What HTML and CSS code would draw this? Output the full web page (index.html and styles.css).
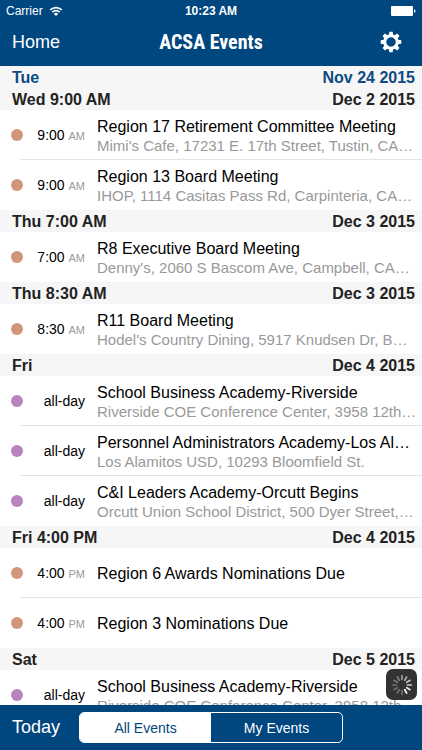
FILE: index.html
```
<!DOCTYPE html>
<html lang="en">

<head>
    <meta charset="utf-8">
    <meta name="viewport" content="width=device-width, initial-scale=1">
    <title>ACSA Events</title>
    <link rel="stylesheet" href="styles.css">
</head>

<body>
    <header>
        <div class="status-bar">
            <div class="carrier">
                <span>Carrier</span>
                <svg width="14" height="10" viewBox="0 0 14 10" fill="none" stroke="#fff" stroke-width="1.7">
                    <path d="M1.2 4 A8.2 8.2 0 0 1 12.8 4" />
                    <path d="M3.4 6.2 A5.1 5.1 0 0 1 10.6 6.2" />
                    <path d="M7 10 L4.9 7.9 A3 3 0 0 1 9.1 7.9 Z" fill="#fff" stroke="none" />
                </svg>
            </div>
            <div class="clock">10:23 AM</div>
            <div class="battery">
                <svg width="25" height="10" viewBox="0 0 25 10" fill="#fff">
                    <rect x="0" y="0" width="22" height="10" rx="1" />
                    <path d="M23 3.2 Q24.6 3.6 24.6 5 Q24.6 6.4 23 6.8 Z" />
                </svg>
            </div>
        </div>
        <nav class="nav-bar">
            <a href="#" class="home">Home</a>
            <h1>ACSA Events</h1>
            <button type="button" class="settings" aria-label="Settings">
                <svg width="22" height="22" viewBox="-11 -11 22 22" fill="#fff">
                    <g id="teeth">
                        <path d="M-2.2 -6.5 L-1.7 -10.3 H1.7 L2.2 -6.5 Z M-2.2 6.5 L-1.7 10.3 H1.7 L2.2 6.5 Z" />
                        <path d="M-6.5 -2.2 L-10.3 -1.7 V1.7 L-6.5 2.2 Z M6.5 -2.2 L10.3 -1.7 V1.7 L6.5 2.2 Z" />
                    </g>
                    <use href="#teeth" transform="rotate(45)" />
                    <circle r="6.3" fill="none" stroke="#fff" stroke-width="3.1" />
                </svg>
            </button>
        </nav>
    </header>

    <main>
        <h2 class="today"><span>Tue</span><span>Nov 24 2015</span></h2>

        <h2><span>Wed 9:00 AM</span><span>Dec 2 2015</span></h2>
        <ul>
            <li class="event">
                <span class="dot"></span>
                <span class="time">9:00 <small>AM</small></span>
                <div class="info">
                    <h3>Region 17 Retirement Committee Meeting</h3>
                    <p>Mimi's Cafe, 17231 E. 17th Street, Tustin, CA…</p>
                </div>
            </li>
            <li class="event">
                <span class="dot"></span>
                <span class="time">9:00 <small>AM</small></span>
                <div class="info">
                    <h3>Region 13 Board Meeting</h3>
                    <p>IHOP, 1114 Casitas Pass Rd, Carpinteria, CA…</p>
                </div>
            </li>
        </ul>

        <h2><span>Thu 7:00 AM</span><span>Dec 3 2015</span></h2>
        <ul>
            <li class="event">
                <span class="dot"></span>
                <span class="time">7:00 <small>AM</small></span>
                <div class="info">
                    <h3>R8 Executive Board Meeting</h3>
                    <p>Denny's, 2060 S Bascom Ave, Campbell, CA…</p>
                </div>
            </li>
        </ul>

        <h2><span>Thu 8:30 AM</span><span>Dec 3 2015</span></h2>
        <ul>
            <li class="event">
                <span class="dot"></span>
                <span class="time">8:30 <small>AM</small></span>
                <div class="info">
                    <h3>R11 Board Meeting</h3>
                    <p>Hodel's Country Dining, 5917 Knudsen Dr, B…</p>
                </div>
            </li>
        </ul>

        <h2><span>Fri</span><span>Dec 4 2015</span></h2>
        <ul>
            <li class="event academy">
                <span class="dot"></span>
                <span class="time">all-day</span>
                <div class="info">
                    <h3>School Business Academy-Riverside</h3>
                    <p>Riverside COE Conference Center, 3958 12th…</p>
                </div>
            </li>
            <li class="event academy">
                <span class="dot"></span>
                <span class="time">all-day</span>
                <div class="info">
                    <h3>Personnel Administrators Academy-Los Al…</h3>
                    <p>Los Alamitos USD, 10293 Bloomfield St.</p>
                </div>
            </li>
            <li class="event academy">
                <span class="dot"></span>
                <span class="time">all-day</span>
                <div class="info">
                    <h3>C&amp;I Leaders Academy-Orcutt Begins</h3>
                    <p>Orcutt Union School District, 500 Dyer Street,…</p>
                </div>
            </li>
        </ul>

        <h2><span>Fri 4:00 PM</span><span>Dec 4 2015</span></h2>
        <ul>
            <li class="event">
                <span class="dot"></span>
                <span class="time">4:00 <small>PM</small></span>
                <div class="info">
                    <h3>Region 6 Awards Nominations Due</h3>
                </div>
            </li>
            <li class="event">
                <span class="dot"></span>
                <span class="time">4:00 <small>PM</small></span>
                <div class="info">
                    <h3>Region 3 Nominations Due</h3>
                </div>
            </li>
        </ul>

        <h2><span>Sat</span><span>Dec 5 2015</span></h2>
        <ul>
            <li class="event academy">
                <span class="dot"></span>
                <span class="time">all-day</span>
                <div class="info">
                    <h3>School Business Academy-Riverside</h3>
                    <p>Riverside COE Conference Center, 3958 12th…</p>
                </div>
            </li>
        </ul>
    </main>

    <footer>
        <div class="loading">
            <svg width="22" height="22" viewBox="-11 -11 22 22" stroke="#fff" stroke-width="1.7" stroke-linecap="round">
                <path d="M0 -5.5 V-9.3" opacity=".5" />
                <path d="M0 -5.5 V-9.3" opacity=".6" transform="rotate(30)" />
                <path d="M0 -5.5 V-9.3" opacity=".7" transform="rotate(60)" />
                <path d="M0 -5.5 V-9.3" opacity=".8" transform="rotate(90)" />
                <path d="M0 -5.5 V-9.3" opacity=".9" transform="rotate(120)" />
                <path d="M0 -5.5 V-9.3" transform="rotate(150)" />
                <path d="M0 -5.5 V-9.3" opacity=".3" transform="rotate(180)" />
                <path d="M0 -5.5 V-9.3" opacity=".3" transform="rotate(210)" />
                <path d="M0 -5.5 V-9.3" opacity=".3" transform="rotate(240)" />
                <path d="M0 -5.5 V-9.3" opacity=".3" transform="rotate(270)" />
                <path d="M0 -5.5 V-9.3" opacity=".35" transform="rotate(300)" />
                <path d="M0 -5.5 V-9.3" opacity=".4" transform="rotate(330)" />
            </svg>
        </div>
        <a href="#" class="go-today">Today</a>
        <div class="tabs">
            <button type="button" class="active">All Events</button>
            <button type="button">My Events</button>
        </div>
    </footer>
</body>

</html>
```
FILE: styles.css
```
* {
    box-sizing: border-box;
    margin: 0;
    padding: 0;
}

body {
    display: flex;
    flex-direction: column;
    height: 100vh;
    font-family: "Liberation Sans", Arial, sans-serif;
    background-color: #fff;
    color: #000;
    overflow: hidden;
}

header,
footer {
    flex: none;
    background-color: #00467f;
    color: #fff;
}

a {
    color: #fff;
    text-decoration: none;
}

button {
    font-family: inherit;
    border: none;
    background: none;
    color: #fff;
    cursor: pointer;
}

.status-bar {
    display: grid;
    grid-template-columns: 1fr auto 1fr;
    align-items: center;
    height: 22px;
    padding: 0 6px;
    font-size: 12px;
}

.carrier {
    display: flex;
    align-items: center;
    gap: 6px;
}

.clock {
    font-weight: bold;
}

.battery {
    display: flex;
    justify-content: flex-end;
}

.nav-bar {
    display: grid;
    grid-template-columns: 1fr auto 1fr;
    align-items: center;
    height: 44px;
    padding: 0 12px 4px;
}

.home,
.go-today {
    font-size: 18px;
}

h1 {
    font-family: "Roboto Condensed", Roboto, "Liberation Sans", sans-serif;
    font-size: 20px;
}

.settings {
    display: flex;
    justify-self: end;
    padding: 0 8px;
}

main {
    flex: 1;
    min-height: 0;
    overflow-y: auto;
    scrollbar-width: none;
}

h2 {
    display: flex;
    justify-content: space-between;
    height: 22px;
    padding: 0 7px 0 12px;
    font-size: 16px;
    line-height: 23px;
    background-color: #f6f6f6;
    color: #222;
}

h2.today {
    color: #0d4a83;
}

ul {
    list-style: none;
}

.event {
    display: flex;
    align-items: center;
    height: 50px;
    padding-left: 11px;
    background: linear-gradient(#e4e4e4, #e4e4e4) 20px 100% / 100% 1px no-repeat;
}

.event:last-child {
    background: none;
}

.dot {
    flex: none;
    width: 12px;
    height: 12px;
    border-radius: 50%;
    background-color: #cf967a;
}

.academy .dot {
    background-color: #b983bf;
}

.time {
    flex: none;
    width: 74px;
    padding-right: 12px;
    font-size: 14px;
    text-align: right;
    white-space: nowrap;
}

.time small {
    font-size: 11px;
    color: #999;
}

.info {
    flex: 1;
    min-width: 0;
    padding-top: 2px;
}

h3,
.info p {
    overflow: hidden;
    text-overflow: ellipsis;
    white-space: nowrap;
}

h3 {
    font-size: 16px;
    font-weight: normal;
    line-height: 20px;
}

.info p {
    font-size: 15px;
    line-height: 18px;
    color: #999;
}

footer {
    position: relative;
    display: flex;
    align-items: center;
    gap: 19px;
    height: 45px;
    padding: 0 12px;
}

.tabs {
    display: flex;
    flex: 0 1 264px;
    height: 31px;
    border: 1px solid #fff;
    border-radius: 5px;
    overflow: hidden;
}

.tabs button {
    flex: 1;
    font-size: 14px;
}

.tabs .active {
    background-color: #fff;
    color: #00467f;
}

/* spinner sits over the end of the list */
.loading {
    position: absolute;
    right: 5px;
    bottom: 50px;
    display: flex;
    align-items: center;
    justify-content: center;
    width: 31px;
    height: 31px;
    border-radius: 7px;
    background-color: #333;
}
```
